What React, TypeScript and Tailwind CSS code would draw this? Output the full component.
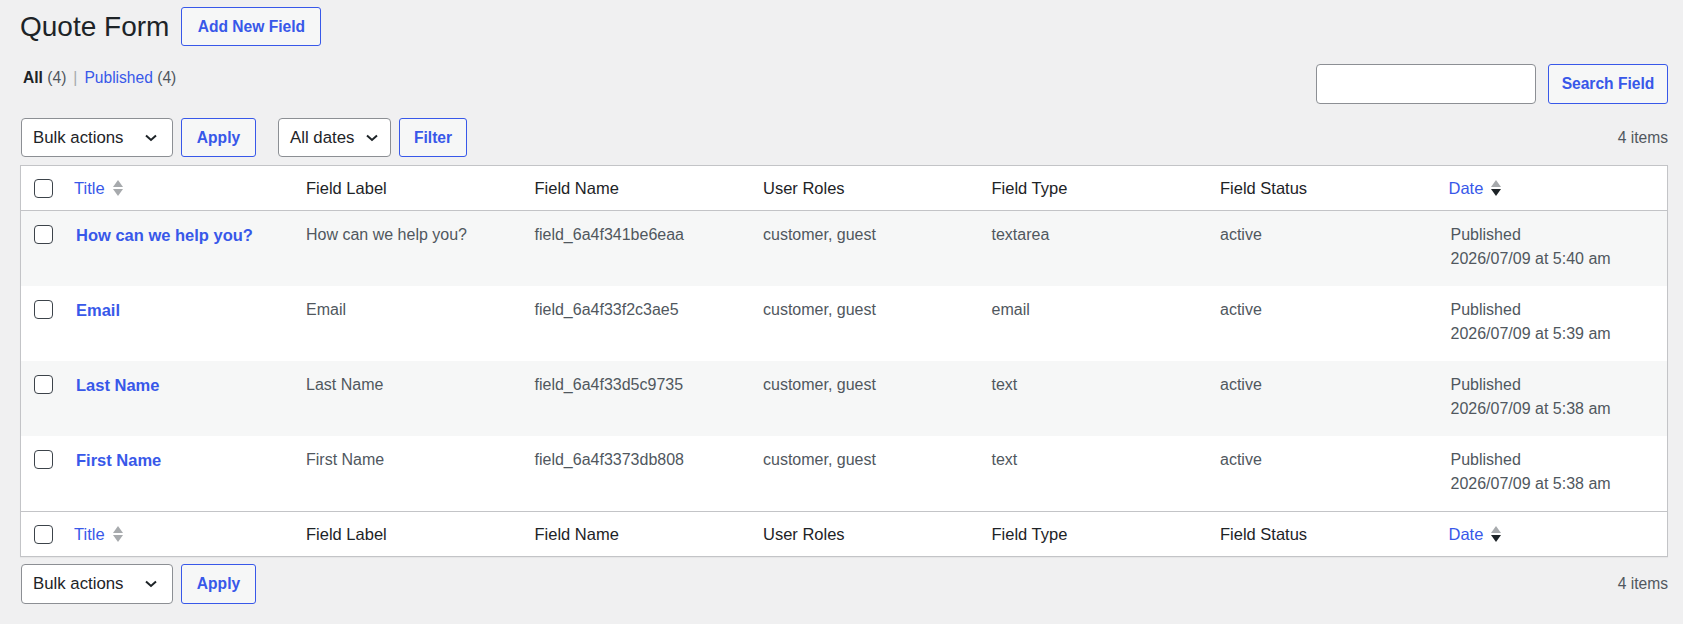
import React from 'react';

type Field = {
    title: string;
    name: string;
    type: string;
    time: string;
};

const fields: Field[] = [
    { title: 'How can we help you?', name: 'field_6a4f341be6eaa', type: 'textarea', time: '5:40 am' },
    { title: 'Email', name: 'field_6a4f33f2c3ae5', type: 'email', time: '5:39 am' },
    { title: 'Last Name', name: 'field_6a4f33d5c9735', type: 'text', time: '5:38 am' },
    { title: 'First Name', name: 'field_6a4f3373db808', type: 'text', time: '5:38 am' },
];

const gridCols = 'grid grid-cols-[43px_232px_repeat(6,minmax(0,1fr))]';

const SortIcon: React.FC<{ active?: boolean }> = ({ active }) => (
    <svg width="10" height="18" viewBox="0 0 10 18" className="ml-[8px] shrink-0">
        <polygon points="0,8 5,1 10,8" fill="#a7aaad" />
        <polygon points="0,10 10,10 5,17" fill={active ? '#1d2327' : '#a7aaad'} />
    </svg>
);

const Chevron = () => (
    <svg width="12" height="8" viewBox="0 0 12 8" className="shrink-0">
        <path d="M1 1.5 L6 6 L11 1.5" stroke="#1d2327" strokeWidth="2" fill="none" />
    </svg>
);

const Checkbox = () => (
    <span className="block w-[19px] h-[19px] rounded-[4px] border border-[#3c434a] bg-white" />
);

const Button: React.FC<{ label: string; className?: string }> = ({ label, className }) => (
    <button
        className={`h-[39px] flex items-center justify-center rounded-[3px] border border-[#3858e9] bg-[#f6f7f7] text-[#3858e9] text-[15.6px] font-bold ${className ?? ''}`}
    >
        {label}
    </button>
);

const Select: React.FC<{ label: string; className?: string }> = ({ label, className }) => (
    <div
        className={`h-[39px] flex items-center justify-between rounded-[4px] border border-[#8c8f94] bg-white pl-[11px] text-[16.8px] text-[#1d2327] ${className ?? ''}`}
    >
        <span>{label}</span>
        <Chevron />
    </div>
);

const HeaderRow: React.FC<{ top?: boolean }> = ({ top }) => (
    <div
        className={`${gridCols} h-[45px] items-center text-[16.5px] text-[#1d2327] ${top ? 'border-b' : 'border-t'} border-[#c3c4c7]`}
    >
        <div className="pl-[13px]">
            <Checkbox />
        </div>
        <div className="pl-[10px] flex items-center">
            <span className="text-[#3858e9]">Title</span>
            <SortIcon />
        </div>
        <div className="pl-[10px]">Field Label</div>
        <div className="pl-[10px]">Field Name</div>
        <div className="pl-[10px]">User Roles</div>
        <div className="pl-[10px]">Field Type</div>
        <div className="pl-[10px]">Field Status</div>
        <div className="pl-[10px] flex items-center">
            <span className="text-[#3858e9]">Date</span>
            <SortIcon active />
        </div>
    </div>
);

export default function App() {
    return (
        <div
            className="min-h-screen bg-[#f0f0f1] pl-[20px] pr-[15px] pt-[7px]"
            style={{ fontFamily: '"Liberation Sans", Arial, sans-serif' }}
        >
            {/* Title */}
            <div className="flex items-center gap-[12px] h-[39px]">
                <h1 className="text-[28px] text-[#1d2327] leading-none">Quote Form</h1>
                <Button label="Add New Field" className="w-[140px]" />
            </div>

            {/* Status links + search */}
            <div className="flex justify-between mt-[18px]">
                <div className="mt-[2px] ml-[3px] text-[15.6px] leading-[24px] text-[#50575e]">
                    <span className="font-bold text-[#1d2327]">All</span> (4)
                    <span className="text-[#a7aaad] mx-[7px]">|</span>
                    <span className="text-[#3858e9]">Published</span> (4)
                </div>
                <div className="flex gap-[12px]">
                    <div className="w-[220px] h-[40px] rounded-[4px] border border-[#8c8f94] bg-white" />
                    <Button label="Search Field" className="w-[120px] !h-[40px]" />
                </div>
            </div>

            {/* Top tablenav */}
            <div className="flex items-center justify-between mt-[14px]">
                <div className="flex items-center">
                    <Select label="Bulk actions" className="w-[152px] pr-[15px] ml-[1px]" />
                    <Button label="Apply" className="w-[75px] ml-[8px]" />
                    <Select label="All dates" className="w-[113px] pr-[12px] ml-[22px]" />
                    <Button label="Filter" className="w-[68px] ml-[8px]" />
                </div>
                <span className="text-[15.6px] text-[#50575e]">4 items</span>
            </div>

            {/* Table */}
            <div className="mt-[8px] border border-[#c3c4c7] bg-white shadow-[0_1px_1px_rgba(0,0,0,0.04)]">
                <HeaderRow top />
                {fields.map((f, i) => (
                    <div
                        key={f.name}
                        className={`${gridCols} h-[75px] items-start pt-[12px] text-[16px] leading-[24px] text-[#50575e] ${i % 2 === 0 ? 'bg-[#f6f7f7]' : 'bg-white'}`}
                    >
                        <div className="pl-[13px] pt-[2px]">
                            <Checkbox />
                        </div>
                        <div className="pl-[12px] text-[16.5px] font-bold text-[#3858e9]">{f.title}</div>
                        <div className="pl-[10px]">{f.title}</div>
                        <div className="pl-[10px]">{f.name}</div>
                        <div className="pl-[10px]">customer, guest</div>
                        <div className="pl-[10px]">{f.type}</div>
                        <div className="pl-[10px]">active</div>
                        <div className="pl-[12px]">
                            Published
                            <br />
                            2026/07/09 at {f.time}
                        </div>
                    </div>
                ))}
                <HeaderRow />
            </div>

            {/* Bottom tablenav */}
            <div className="flex items-center justify-between mt-[7px]">
                <div className="flex items-center">
                    <Select label="Bulk actions" className="w-[152px] pr-[15px] ml-[1px] !h-[40px]" />
                    <Button label="Apply" className="w-[75px] ml-[8px] !h-[40px]" />
                </div>
                <span className="text-[15.6px] text-[#50575e]">4 items</span>
            </div>
        </div>
    );
}
